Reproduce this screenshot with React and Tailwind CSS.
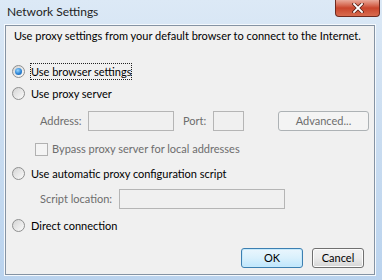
// Boîte de dialogue "Network Settings" — style Windows 7, statique
const font = { fontFamily: 'Lato, "Noto Sans", sans-serif' }

function Radio({ checked }) {
  return (
    <span className="w-[13px] h-[13px] shrink-0 rounded-full border border-[#8e8f8f] bg-gradient-to-br from-[#d4d4d4] to-[#fbfbfb] flex items-center justify-center">
      {checked && (
        <span className="w-[7px] h-[7px] rounded-full bg-[radial-gradient(circle_at_40%_35%,#9ad7ff,#2b83d4_55%,#135aa8)]" />
      )}
    </span>
  )
}

function RadioRow({ label, checked, focused, className }) {
  return (
    <div className={`h-[20px] flex items-center pl-[6px] whitespace-nowrap ${className}`}>
      <Radio checked={checked} />
      <span
        className={`ml-[5px] leading-[15px] border border-dotted ${focused ? 'border-[#222]' : 'border-transparent'}`}
      >
        {label}
      </span>
    </div>
  )
}

function Input({ className }) {
  return <span className={`h-[20px] shrink-0 border border-[#b5b5b5] bg-[#f0f0f0] ${className}`} />
}

export default function App() {
  return (
    <div
      style={font}
      className="w-[382px] h-[280px] flex flex-col bg-gradient-to-b from-[#dce9f6] via-[#c9dcf0] to-[#bad3ee] text-[11px] text-black overflow-hidden"
    >
      {/* barre de titre */}
      <div className="h-[24px] flex items-start">
        <span className="pl-[7px] pt-[3px] leading-[18px] text-[12px] text-[#1e1e1e]">Network Settings</span>
        <div className="ml-auto mr-[2px] w-[45px] h-[17px] rounded-b-[4px] border border-t-0 border-[#6e2a1f] bg-gradient-to-b from-[#e9a99a] via-[#c9452c] to-[#d86b4f] flex items-center justify-center">
          <svg width="12" height="10" viewBox="0 0 12 10">
            <path d="M2 1 L10 9 M10 1 L2 9" stroke="#5a2218" strokeWidth="3.4" strokeLinecap="square" />
            <path d="M2 1 L10 9 M10 1 L2 9" stroke="#ffffff" strokeWidth="1.8" strokeLinecap="square" />
          </svg>
        </div>
      </div>

      {/* zone client */}
      <div className="ml-[4px] w-[372px] h-[252px] border border-[#f5f9fd]">
        <div className="h-full border border-[#8593a3] bg-[#f0f0f0] flex flex-col">
          <div className="h-[20px] leading-[20px] pl-[8px] whitespace-nowrap">
            Use proxy settings from your default browser to connect to the Internet.
          </div>

          <RadioRow className="mt-[15px]" label="Use browser settings" checked focused />
          <RadioRow className="mt-[2px]" label="Use proxy server" />

          {/* adresse / port */}
          <div className="mt-[8px] h-[20px] flex items-center pl-[34px] text-[#6d6d6d] whitespace-nowrap">
            <span className="w-[48px] shrink-0">Address:</span>
            <Input className="w-[86px]" />
            <span className="ml-[9px] w-[30px] shrink-0">Port:</span>
            <Input className="w-[31px]" />
            <span className="ml-[34px] w-[91px] h-[20px] shrink-0 rounded-[3px] border border-[#adb2b5] bg-[#f4f4f4] flex items-center justify-center">
              Advanced...
            </span>
          </div>

          <div className="mt-[8px] h-[20px] flex items-center pl-[29px] text-[#6d6d6d] whitespace-nowrap">
            <span className="w-[13px] h-[13px] shrink-0 border border-[#b1b1b1] bg-[#f4f4f4]" />
            <span className="ml-[4px]">Bypass proxy server for local addresses</span>
          </div>

          <RadioRow className="mt-[4px]" label="Use automatic proxy configuration script" />

          <div className="mt-[6px] h-[20px] flex items-center pl-[34px] text-[#6d6d6d] whitespace-nowrap">
            <span className="w-[79px] shrink-0">Script location:</span>
            <Input className="w-[166px]" />
          </div>

          <RadioRow className="mt-[6px]" label="Direct connection" />

          {/* boutons */}
          <div className="mt-[13px] h-[20px] flex justify-end gap-[9px] pr-[10px]">
            <button className="w-[62px] h-[20px] rounded-[3px] border border-[#3c7fb1] bg-gradient-to-b from-[#eaf6fd] via-[#d9f0fc] to-[#bee6fd] shadow-[inset_0_0_0_1px_#c6e9fb]">
              OK
            </button>
            <button className="w-[52px] h-[20px] rounded-[3px] border border-[#707070] bg-gradient-to-b from-[#f2f2f2] via-[#ebebeb] to-[#d5d5d5] shadow-[inset_0_0_0_1px_#fcfcfc]">
              Cancel
            </button>
          </div>
        </div>
      </div>
    </div>
  )
}
